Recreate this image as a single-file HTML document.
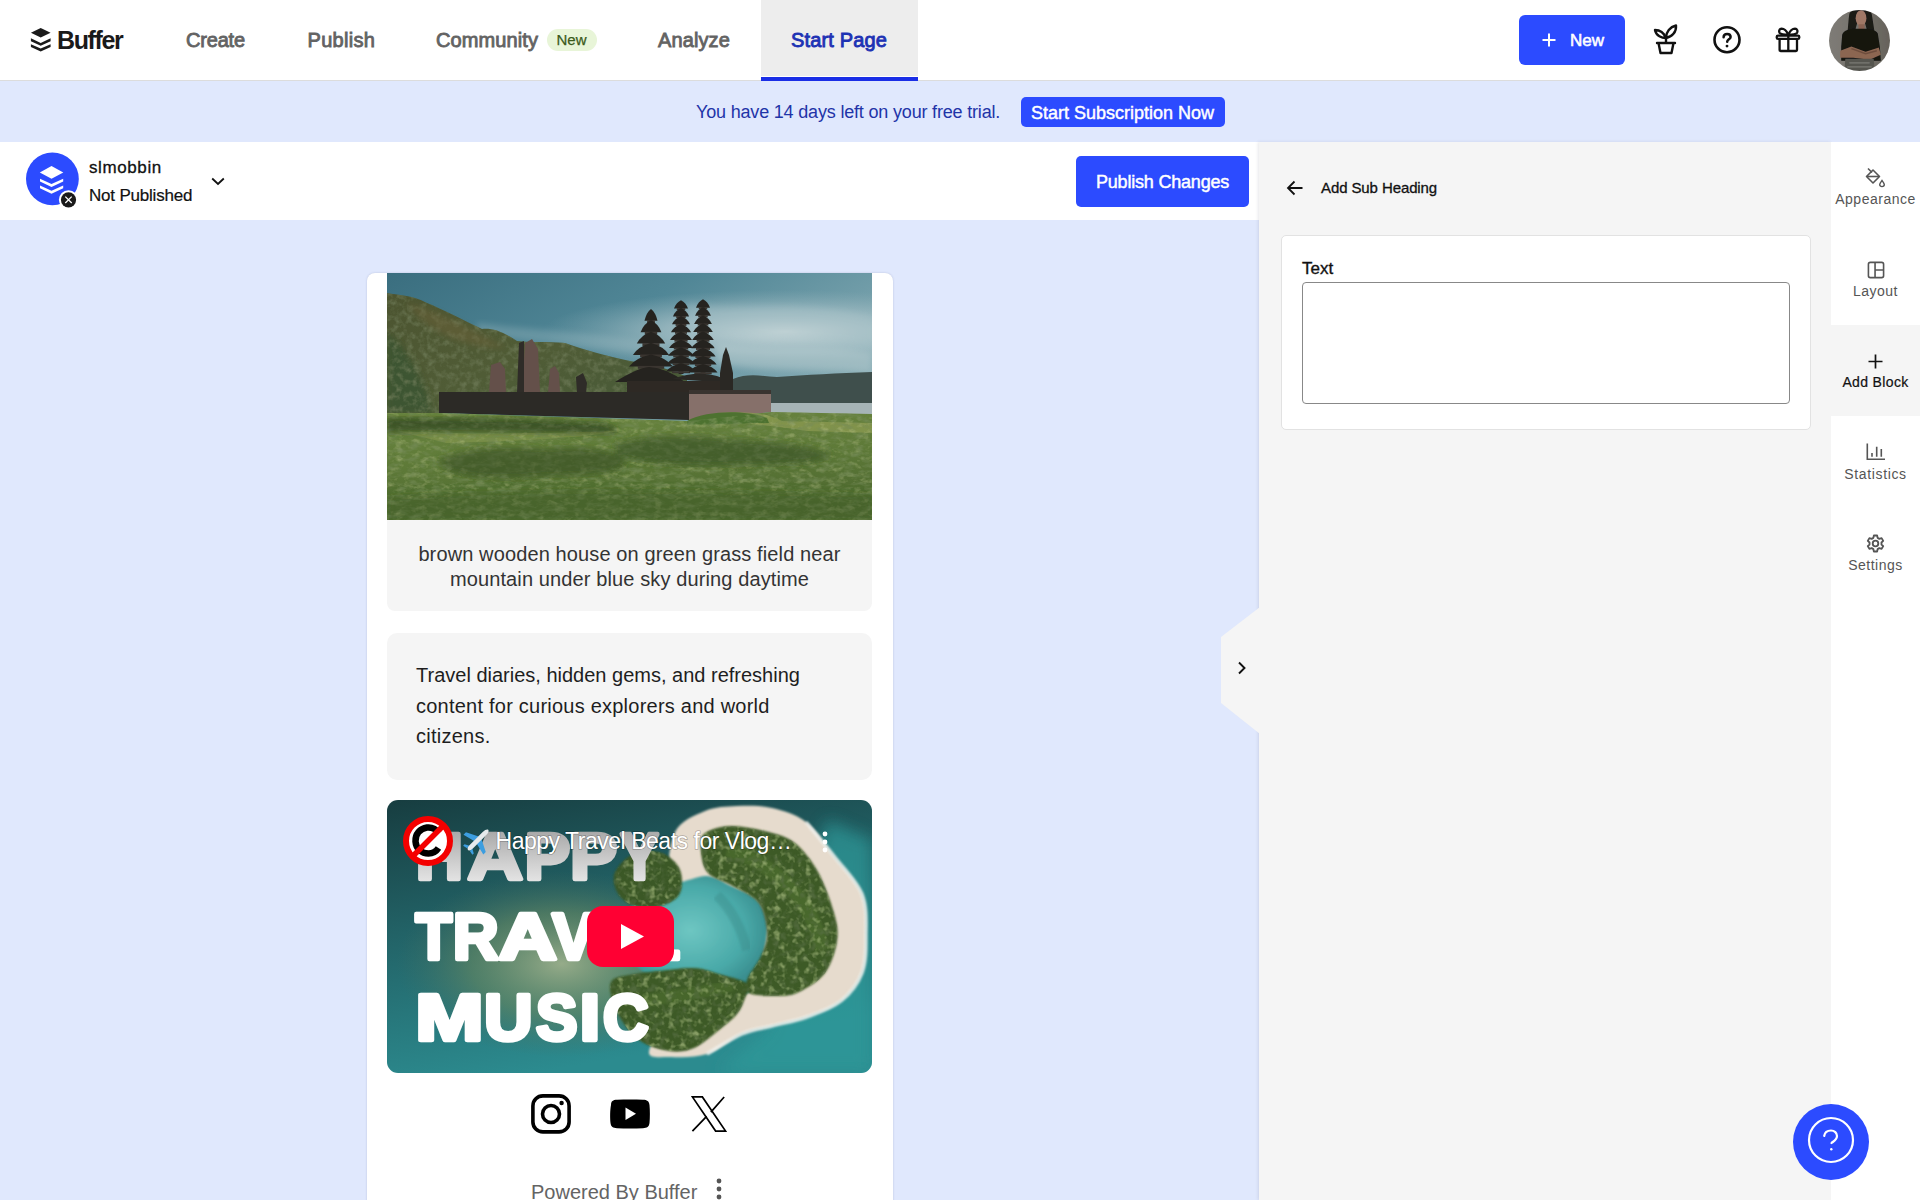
<!DOCTYPE html>
<html><head><meta charset="utf-8">
<style>
*{box-sizing:border-box;margin:0;padding:0}
html,body{width:1920px;height:1200px;overflow:hidden;background:#fff;font-family:"Liberation Sans",sans-serif;position:relative}
.a{position:absolute}
.t{position:absolute;white-space:nowrap;line-height:1}
/* header */
#hdr{left:0;top:0;width:1920px;height:81px;background:#fff;border-bottom:1px solid #dcdcdc}
.nav{font-size:20px;color:#636363;-webkit-text-stroke:0.85px #636363;letter-spacing:0.1px}
#banner{left:0;top:81px;width:1920px;height:61px;background:#e0e8fd}
#sub{left:0;top:142px;width:1259px;height:78px;background:#fff}
#canvas{left:0;top:220px;width:1259px;height:980px;background:#e0e8fd}
#panel{left:1259px;top:142px;width:572px;height:1058px;background:#f5f5f5;box-shadow:-1px 0 3px rgba(60,60,90,0.12)}
#side{left:1831px;top:142px;width:89px;height:1058px;background:#fff}
.btn{background:#2c4bff;color:#fff;border-radius:5px}
.sidelbl{font-size:14px;color:#555;width:89px;text-align:center;left:0;letter-spacing:0.5px}
</style></head><body>

<div id="hdr" class="a"></div>
<!-- logo -->
<svg class="a" style="left:30px;top:28px" width="22" height="24" viewBox="0 0 22 24">
  <path d="M10.7 0 L20.6 4.7 L10.7 9.4 L0.9 4.7 Z" fill="#1a1a1a"/>
  <path d="M0.9 10.3 L10.7 14.9 L20.6 10.3 L20.6 13.2 L10.7 17.8 L0.9 13.2 Z" fill="#1a1a1a"/>
  <path d="M0.9 16.2 L10.7 20.6 L20.6 16.2 L20.6 19.1 L10.7 23.5 L0.9 19.1 Z" fill="#1a1a1a"/>
</svg>
<div class="t" style="left:57px;top:28px;font-size:25px;font-weight:bold;color:#1a1a1a;letter-spacing:-1.4px">Buffer</div>

<div class="t nav" style="left:186px;top:30px;letter-spacing:-0.2px">Create</div>
<div class="t nav" style="left:307.5px;top:30px;letter-spacing:0.3px">Publish</div>
<div class="t nav" style="left:436px;top:30px">Community</div>
<div class="a" style="left:547px;top:29px;width:50px;height:22px;border-radius:11px;background:#e8f5d8"></div>
<div class="t" style="left:556.5px;top:32px;font-size:15px;color:#3a5a1a;-webkit-text-stroke:0.25px #3a5a1a">New</div>
<div class="t nav" style="left:658px;top:30px">Analyze</div>
<div class="a" style="left:761px;top:0;width:157px;height:76px;background:#ededed"></div>
<div class="a" style="left:761px;top:77px;width:157px;height:5px;background:#1a2ee6"></div>
<div class="t nav" style="left:791px;top:30px;color:#1d32b4;-webkit-text-stroke:0.85px #1d32b4;letter-spacing:0.15px">Start Page</div>

<div class="a btn" style="left:1519px;top:15px;width:106px;height:50px;border-radius:6px"></div>
<svg class="a" style="left:1542px;top:33px" width="14" height="14" viewBox="0 0 14 14"><path d="M7 0.5V13.5M0.5 7H13.5" stroke="#fff" stroke-width="2"/></svg>
<div class="t" style="left:1570px;top:32px;font-size:17px;color:#fff;-webkit-text-stroke:0.55px #fff">New</div>

<!-- plant -->
<svg class="a" style="left:1652px;top:24px" width="28" height="32" viewBox="0 0 28 32">
 <path d="M14 14 C10 14 4 12 3 6 C8 6 12 9 14 14 Z" fill="none" stroke="#111" stroke-width="2.4" stroke-linejoin="round"/>
 <path d="M14 14 C14 8 18 3 24 1.5 C24.5 8 20 13 14 14 Z" fill="none" stroke="#111" stroke-width="2.4" stroke-linejoin="round"/>
 <path d="M14 14 V19" stroke="#111" stroke-width="2.4"/>
 <path d="M5 19 H23 M6.5 19 L8.5 29 H19.5 L21.5 19" fill="none" stroke="#111" stroke-width="2.4" stroke-linejoin="round" stroke-linecap="round"/>
</svg>
<!-- help -->
<svg class="a" style="left:1712px;top:25px" width="30" height="30" viewBox="0 0 30 30">
 <circle cx="15" cy="14.7" r="12.5" fill="none" stroke="#111" stroke-width="2.6"/>
 <path d="M11.6 12.2 C11.6 10.1 13.1 8.9 15.1 8.9 C17.1 8.9 18.6 10.2 18.6 11.9 C18.6 14.2 15.2 14.5 15.2 16.8" fill="none" stroke="#111" stroke-width="2.5" stroke-linecap="round"/>
 <circle cx="15" cy="21.1" r="1.45" fill="#111"/>
</svg>
<!-- gift -->
<svg class="a" style="left:1773px;top:26px" width="30" height="28" viewBox="0 0 30 28">
 <rect x="3.75" y="9.55" width="22.5" height="3.4" rx="1.3" fill="none" stroke="#111" stroke-width="2.3"/>
 <path d="M6.6 13 V24 Q6.6 25 7.6 25 H23 Q24 25 24 24 V13" fill="none" stroke="#111" stroke-width="2.3"/>
 <path d="M15.3 9.5 V25" stroke="#111" stroke-width="2.3"/>
 <path d="M15.3 8.6 C13.5 4.6 11 2.6 8.6 2.6 C6.4 2.7 5.6 5.2 6.6 6.8 C7.6 8.3 10.5 8.6 15.3 8.6 C20.1 8.6 23 8.3 24 6.8 C25 5.2 24.2 2.7 22 2.6 C19.6 2.6 17.1 4.6 15.3 8.6 Z" fill="none" stroke="#111" stroke-width="2.3" stroke-linejoin="round"/>
</svg>
<!-- avatar -->
<svg class="a" style="left:1829px;top:10px" width="61" height="61" viewBox="0 0 60 60">
 <defs><clipPath id="av"><circle cx="30" cy="30" r="30"/></clipPath>
 <linearGradient id="avbg" x1="0" y1="0" x2="1" y2="0"><stop offset="0" stop-color="#7e7b76"/><stop offset="0.5" stop-color="#76736d"/><stop offset="1" stop-color="#66625b"/></linearGradient>
 <filter id="avs"><feGaussianBlur stdDeviation="0.5"/></filter></defs>
 <g clip-path="url(#av)" filter="url(#avs)">
  <rect width="60" height="60" fill="url(#avbg)"/>
  <path d="M20 4 C21 -2 41 -2 42 4 C43 10 44 16 45 23 L38 24 C37 18 36 14 35 12 L28 12 C27 15 26 19 25 24 L18 23 C19 16 19 10 20 4 Z" fill="#1a1a17"/>
  <ellipse cx="31.5" cy="8" rx="5.3" ry="7.8" fill="#a07866"/>
  <rect x="29" y="14" width="6" height="5" fill="#8a6352"/>
  <path d="M13 24 C15 19 22 18 30 18.5 C38 18 46 19 48 23 L50 36 L51 50 L12 50 L12 36 Z" fill="#121311"/>
  <path d="M11 40 L22 36 L36 41 L49 37 L51 44 L40 49 L24 47 L11 47 Z" fill="#8c6651"/>
  <path d="M22 38 L36 43 L47 40" fill="none" stroke="#6e4e3e" stroke-width="1.5"/>
  <path d="M16 48 L44 48 L45 62 L15 62 Z" fill="#55544f"/>
  <path d="M20 52 L40 52 M18 56 L42 56" stroke="#7a7a76" stroke-width="1.2"/>
 </g>
</svg>

<!-- banner -->
<div id="banner" class="a"></div>
<div class="t" style="left:696px;top:103px;font-size:18px;color:#1f34a8;letter-spacing:-0.18px">You have 14 days left on your free trial.</div>
<div class="a btn" style="left:1021px;top:97px;width:204px;height:30px;border-radius:5px"></div>
<div class="t" style="left:1031px;top:104px;font-size:18px;color:#fff;-webkit-text-stroke:0.45px #fff">Start Subscription Now</div>

<!-- sub header -->
<div id="sub" class="a"></div>
<div id="canvas" class="a"></div>
<div id="panel" class="a"></div>
<div id="side" class="a"></div>


<!-- sub header content -->
<svg class="a" style="left:25px;top:152px" width="56" height="58" viewBox="0 0 56 58">
 <circle cx="27.4" cy="26.9" r="26.4" fill="#2c4bff"/>
 <path d="M26.5 14 L38.3 20.4 L26.5 26.8 L14.8 20.4 Z" fill="#fff"/>
 <path d="M15 26.7 L26.5 32 L38.2 26.7 L38.2 29.4 L26.5 34.9 L15 29.4 Z" fill="#fff"/>
 <path d="M15 33.5 L26.5 38.8 L38.2 33.5 L38.2 36.3 L26.5 41.8 L15 36.3 Z" fill="#fff"/>
 <circle cx="43.5" cy="47.8" r="9.6" fill="#fff"/>
 <circle cx="43.5" cy="47.8" r="7.6" fill="#1a1a1a"/>
 <path d="M40.3 44.6 L46.7 51 M46.7 44.6 L40.3 51" stroke="#fff" stroke-width="1.3"/>
</svg>
<div class="t" style="left:89px;top:159px;font-size:17px;color:#111;letter-spacing:0.6px;-webkit-text-stroke:0.3px #111">slmobbin</div>
<div class="t" style="left:89px;top:187px;font-size:17px;color:#111;letter-spacing:-0.2px;-webkit-text-stroke:0.2px #111">Not Published</div>
<svg class="a" style="left:211px;top:177px" width="14" height="9" viewBox="0 0 14 9"><path d="M1.2 1.5 L7 7 L12.8 1.5" fill="none" stroke="#111" stroke-width="1.8"/></svg>
<div class="a btn" style="left:1076px;top:156px;width:173px;height:51px;border-radius:5px"></div>
<div class="t" style="left:1096px;top:173px;font-size:18px;color:#fff;-webkit-text-stroke:0.45px #fff;letter-spacing:-0.2px">Publish Changes</div>


<!-- preview card -->
<div class="a" style="left:367px;top:273px;width:526px;height:940px;background:#fff;border-radius:8px;box-shadow:0 0 2px rgba(60,70,120,0.25)"></div>
<svg class="a" style="left:387px;top:273px" width="485" height="247" viewBox="0 0 485 247">
 <defs>
  <linearGradient id="sky" x1="0" y1="0" x2="0.8" y2="0.7"><stop offset="0" stop-color="#3a6e7f"/><stop offset="0.45" stop-color="#508696"/><stop offset="1" stop-color="#8db0b8"/></linearGradient>
  <radialGradient id="skyl" cx="0.82" cy="0.42" r="0.5" gradientTransform="translate(0.41 0.42) scale(1 0.6) translate(-0.41 -0.42)"><stop offset="0" stop-color="#cad8da" stop-opacity="1"/><stop offset="0.5" stop-color="#a9c2c8" stop-opacity="0.7"/><stop offset="1" stop-color="#8fb0b8" stop-opacity="0"/></radialGradient>
  <linearGradient id="grass" x1="0" y1="0" x2="0.2" y2="1"><stop offset="0" stop-color="#6a853f"/><stop offset="0.5" stop-color="#5e7a38"/><stop offset="1" stop-color="#4c672f"/></linearGradient>
  <linearGradient id="hill" x1="0" y1="0" x2="1" y2="1"><stop offset="0" stop-color="#4c5430"/><stop offset="0.5" stop-color="#505c36"/><stop offset="1" stop-color="#465a38"/></linearGradient>
  <filter id="tsoft"><feGaussianBlur stdDeviation="3"/></filter>
  <filter id="gtex" x="0" y="0" width="100%" height="100%"><feTurbulence type="fractalNoise" baseFrequency="0.09 0.2" numOctaves="3" seed="7"/><feColorMatrix values="0 0 0 0 0.18  0 0 0 0 0.26  0 0 0 0 0.1  2.2 0 0 0 -0.95"/></filter>
  <filter id="gtex2" x="0" y="0" width="100%" height="100%"><feTurbulence type="fractalNoise" baseFrequency="0.12 0.18" numOctaves="3" seed="11"/><feColorMatrix values="0 0 0 0 0.62  0 0 0 0 0.66  0 0 0 0 0.35  2.2 0 0 0 -1.1"/></filter>
  <filter id="htex" x="0" y="0" width="100%" height="100%"><feTurbulence type="fractalNoise" baseFrequency="0.15" numOctaves="3" seed="5"/><feColorMatrix values="0 0 0 0 0.16  0 0 0 0 0.2  0 0 0 0 0.1  -2.6 0 0 0 1.5"/></filter>
  <clipPath id="gclip"><path d="M0 140 L52 140 L302 148 L384 139 L485 141 L485 247 L0 247 Z"/></clipPath>
  <clipPath id="hclip"><path d="M0 20 C10 22 25 22 40 30 C55 36 70 44 95 56 C105 55 115 58 130 68 C145 70 160 68 178 70 C195 76 215 82 243 88 C265 92 285 96 300 104 L300 140 L0 140 Z"/></clipPath>
 </defs>
 <rect width="485" height="247" fill="url(#sky)"/>
 <rect width="485" height="140" fill="url(#skyl)"/>
 <path d="M300 30 C350 40 420 25 485 45 L485 75 C420 60 360 70 300 55 Z" fill="#a8c2c8" opacity="0.35" filter="url(#tsoft)"/><path d="M330 70 C390 80 440 70 485 80 L485 100 C430 95 380 100 330 90 Z" fill="#c0d2d4" opacity="0.4" filter="url(#tsoft)"/>
 <path d="M90 50 C150 58 220 60 280 72 L270 82 C200 75 140 70 90 60 Z" fill="#a8c2c8" opacity="0.3" filter="url(#tsoft)"/>
 <path d="M0 20 C10 22 25 22 40 30 C55 36 70 44 95 56 C105 55 115 58 130 68 C145 70 160 68 178 70 C195 76 215 82 243 88 C265 92 285 96 300 104 L300 140 L0 140 Z" fill="url(#hill)"/>
 <path d="M0 60 C15 70 30 95 40 120 L45 140 L0 140 Z" fill="#3e5530" filter="url(#tsoft)"/>
 <g clip-path="url(#hclip)"><rect x="0" y="0" width="260" height="140" filter="url(#htex)" opacity="0.7"/></g>
 <path d="M20 30 C60 40 90 60 120 75 C80 75 40 60 20 30 Z" fill="#6a6038" opacity="0.5" filter="url(#tsoft)"/>
 
 <path d="M346 106 C360 100 375 103 390 104 C420 102 450 100 485 99 L485 130 L346 130 Z" fill="#3f4f4c"/>
 <rect x="384" y="130" width="101" height="11" fill="#a6b4b6"/>
 <!-- gates -->
 <path d="M104 92 L113 89 L118 96 L119 120 L102 120 Z" fill="#64504a"/>
 <path d="M138 70 L145 66 L151 76 L153 120 L135 120 Z" fill="#64504a"/>
 <path d="M132 70 L137 68 L137 120 L130 120 Z" fill="#2f2c28"/>
 <path d="M163 96 L168 93 L172 100 L173 120 L161 120 Z" fill="#64504a"/>
 <path d="M189 104 L196 100 L200 110 L199 120 L190 120 Z" fill="#2f2c28"/>
 <!-- pagodas -->
 <rect x="261.5" y="39" width="5" height="57" fill="#25231f"/>
 <path d="M257.5 47.8 Q259.4 39.3 264 35.9 Q268.6 39.3 270.5 47.8 Z" fill="#25231f"/>
 <rect x="260.1" y="47.3" width="7.8" height="2.9" fill="#3a3530"/>
 <path d="M253.6 59.2 Q256.7 50.7 264 47.3 Q271.3 50.7 274.4 59.2 Z" fill="#25231f"/>
 <rect x="257.8" y="58.7" width="12.4" height="2.9" fill="#3a3530"/>
 <path d="M249.8 70.6 Q254.0 62.1 264 58.7 Q274.0 62.1 278.2 70.6 Z" fill="#25231f"/>
 <rect x="255.4" y="70.1" width="17.1" height="2.9" fill="#3a3530"/>
 <path d="M245.9 82.0 Q251.3 73.5 264 70.1 Q276.7 73.5 282.1 82.0 Z" fill="#25231f"/>
 <rect x="253.1" y="81.5" width="21.8" height="2.9" fill="#3a3530"/>
 <path d="M242.0 93.4 Q248.6 84.9 264 81.5 Q279.4 84.9 286.0 93.4 Z" fill="#25231f"/>
 <rect x="250.8" y="92.9" width="26.4" height="2.9" fill="#3a3530"/>
 <rect x="291.5" y="30" width="5" height="71" fill="#25231f"/>
 <path d="M287.0 35.5 Q289.1 29.6 294 27.2 Q298.9 29.6 301.0 35.5 Z" fill="#25231f"/>
 <rect x="289.8" y="35.1" width="8.4" height="2.0" fill="#3a3530"/>
 <path d="M286.0 43.4 Q288.4 37.5 294 35.1 Q299.6 37.5 302.0 43.4 Z" fill="#25231f"/>
 <rect x="289.2" y="43.0" width="9.6" height="2.0" fill="#3a3530"/>
 <path d="M285.0 51.3 Q287.7 45.4 294 43.0 Q300.3 45.4 303.0 51.3 Z" fill="#25231f"/>
 <rect x="288.6" y="50.9" width="10.8" height="2.0" fill="#3a3530"/>
 <path d="M284.0 59.2 Q287.0 53.2 294 50.9 Q301.0 53.2 304.0 59.2 Z" fill="#25231f"/>
 <rect x="288.0" y="58.8" width="12.0" height="2.0" fill="#3a3530"/>
 <path d="M283.0 67.0 Q286.3 61.1 294 58.8 Q301.7 61.1 305.0 67.0 Z" fill="#25231f"/>
 <rect x="287.4" y="66.7" width="13.2" height="2.0" fill="#3a3530"/>
 <path d="M282.0 74.9 Q285.6 69.0 294 66.7 Q302.4 69.0 306.0 74.9 Z" fill="#25231f"/>
 <rect x="286.8" y="74.5" width="14.4" height="2.0" fill="#3a3530"/>
 <path d="M281.0 82.8 Q284.9 76.9 294 74.5 Q303.1 76.9 307.0 82.8 Z" fill="#25231f"/>
 <rect x="286.2" y="82.4" width="15.6" height="2.0" fill="#3a3530"/>
 <path d="M280.0 90.7 Q284.2 84.8 294 82.4 Q303.8 84.8 308.0 90.7 Z" fill="#25231f"/>
 <rect x="285.6" y="90.3" width="16.8" height="2.0" fill="#3a3530"/>
 <path d="M279.0 98.6 Q283.5 92.7 294 90.3 Q304.5 92.7 309.0 98.6 Z" fill="#25231f"/>
 <rect x="285.0" y="98.2" width="18.0" height="2.0" fill="#3a3530"/>
 <rect x="313.5" y="29" width="5" height="73" fill="#25231f"/>
 <path d="M309.0 34.7 Q311.1 28.6 316 26.2 Q320.9 28.6 323.0 34.7 Z" fill="#25231f"/>
 <rect x="311.8" y="34.3" width="8.4" height="2.0" fill="#3a3530"/>
 <path d="M308.1 42.8 Q310.4 36.7 316 34.3 Q321.6 36.7 323.9 42.8 Z" fill="#25231f"/>
 <rect x="311.2" y="42.4" width="9.5" height="2.0" fill="#3a3530"/>
 <path d="M307.1 50.9 Q309.8 44.8 316 42.4 Q322.2 44.8 324.9 50.9 Z" fill="#25231f"/>
 <rect x="310.7" y="50.5" width="10.7" height="2.0" fill="#3a3530"/>
 <path d="M306.2 59.0 Q309.1 53.0 316 50.5 Q322.9 53.0 325.8 59.0 Z" fill="#25231f"/>
 <rect x="310.1" y="58.6" width="11.8" height="2.0" fill="#3a3530"/>
 <path d="M305.2 67.1 Q308.5 61.1 316 58.6 Q323.5 61.1 326.8 67.1 Z" fill="#25231f"/>
 <rect x="309.6" y="66.7" width="12.9" height="2.0" fill="#3a3530"/>
 <path d="M304.3 75.3 Q307.8 69.2 316 66.7 Q324.2 69.2 327.7 75.3 Z" fill="#25231f"/>
 <rect x="309.0" y="74.9" width="14.0" height="2.0" fill="#3a3530"/>
 <path d="M303.4 83.4 Q307.2 77.3 316 74.9 Q324.8 77.3 328.6 83.4 Z" fill="#25231f"/>
 <rect x="308.4" y="83.0" width="15.1" height="2.0" fill="#3a3530"/>
 <path d="M302.4 91.5 Q306.5 85.4 316 83.0 Q325.5 85.4 329.6 91.5 Z" fill="#25231f"/>
 <rect x="307.9" y="91.1" width="16.3" height="2.0" fill="#3a3530"/>
 <path d="M301.5 99.6 Q305.9 93.5 316 91.1 Q326.1 93.5 330.5 99.6 Z" fill="#25231f"/>
 <rect x="307.3" y="99.2" width="17.4" height="2.0" fill="#3a3530"/>
 <path d="M228 109 Q250 95 262 94 Q280 95 298 109 Z" fill="#25231f"/>
 <path d="M285 106 Q320 94 345 110 Z" fill="#2a2824"/>
 <rect x="240" y="108" width="100" height="12" fill="#2e2924"/>
 <path d="M336 82 L339 74 L342 82 L346 100 L346 120 L333 120 L333 100 Z" fill="#2a2824"/>
 <!-- walls -->
 <path d="M52 119 L302 119 L302 147 L52 140 Z" fill="#2c2a26"/>
 <path d="M302 119 L384 121 L384 139 L302 149 Z" fill="#86706a"/>
 <rect x="302" y="117" width="82" height="4" fill="#3a3430"/>
 <!-- grass -->
 <path d="M0 140 L52 140 L302 148 L384 139 L485 141 L485 247 L0 247 Z" fill="url(#grass)"/>
 <path d="M330 140 C360 138 380 140 395 148 L485 150 L485 160 L420 158 C380 152 350 150 330 146 Z" fill="#8a9850" opacity="0.8"/>
 <path d="M0 145 C60 144 150 146 210 150 C240 156 240 160 200 158 C120 156 50 155 0 156 Z" fill="#3f5a28" opacity="0.8" filter="url(#tsoft)"/>
 <path d="M300 148 C320 137 360 137 380 145 L382 150 L300 152 Z" fill="#4d7230"/>
 <path d="M10 158 C80 162 160 160 230 158 C200 165 130 168 60 170 Z" fill="#8a9a52" opacity="0.55"/>
 <path d="M55 195 C70 180 110 178 160 180 C200 175 240 180 240 195 C230 205 190 200 140 205 C100 206 70 205 55 195 Z" fill="#48662c" opacity="0.6" filter="url(#tsoft)"/>
 <path d="M230 175 C260 165 300 165 340 170 C380 172 420 175 440 185 C420 195 380 192 340 193 C300 195 260 192 230 185 Z" fill="#48662c" opacity="0.6" filter="url(#tsoft)"/>
 <path d="M0 215 C100 205 300 208 485 212 L485 247 L0 247 Z" fill="#4e6e2e" opacity="0.55"/>
 <g clip-path="url(#gclip)"><rect x="0" y="130" width="485" height="117" filter="url(#gtex2)" opacity="0.45"/><rect x="0" y="130" width="485" height="117" filter="url(#gtex)" opacity="0.8"/></g>
 <g filter="url(#tsoft)">
  <path d="M0 146 C60 145 150 147 215 151 C240 156 236 162 200 161 C120 159 50 158 0 160 Z" fill="#2e4620" opacity="0.55"/>
  <path d="M50 188 C70 176 110 172 160 176 C200 172 235 178 238 190 C228 203 190 200 140 204 C100 206 66 204 50 188 Z" fill="#3a5424" opacity="0.6"/>
  <path d="M228 170 C260 162 300 160 340 166 C380 168 425 172 445 182 C425 193 380 190 340 192 C300 194 258 190 228 182 Z" fill="#3a5424" opacity="0.55"/>
  <path d="M0 225 C120 215 300 218 485 222 L485 247 L0 247 Z" fill="#3f5a26" opacity="0.4"/>
 </g>
</svg>
<div class="a" style="left:387px;top:520px;width:485px;height:91px;background:#f5f5f5;border-radius:0 0 8px 8px"></div>
<div class="a" style="left:387px;top:542px;width:485px;text-align:center;font-size:20px;line-height:25px;color:#333;white-space:normal;letter-spacing:0.12px">brown wooden house on green grass field near<br>mountain under blue sky during daytime</div>

<div class="a" style="left:387px;top:633px;width:485px;height:147px;background:#f5f5f5;border-radius:10px"></div>
<div class="a" style="left:416px;top:660px;font-size:20px;line-height:30.5px;color:#1e1e1e;white-space:nowrap">Travel diaries, hidden gems, and refreshing<br><span style="letter-spacing:0.23px">content for curious explorers and world</span><br><span style="letter-spacing:0.25px">citizens.</span></div>

<!-- video -->
<svg class="a" style="left:387px;top:800px" width="485" height="273" viewBox="0 0 485 273">
 <defs>
  <clipPath id="vc"><rect width="485" height="273" rx="11"/></clipPath>
  <linearGradient id="sea" x1="0" y1="0" x2="0.3" y2="1"><stop offset="0" stop-color="#173d40"/><stop offset="0.45" stop-color="#226266"/><stop offset="1" stop-color="#2c8b8f"/></linearGradient>
  <radialGradient id="glow" cx="0.36" cy="0.6" r="0.34"><stop offset="0" stop-color="#a2b28c" stop-opacity="0.9"/><stop offset="0.55" stop-color="#6f8a5e" stop-opacity="0.55"/><stop offset="1" stop-color="#4a6a58" stop-opacity="0"/></radialGradient>
  <radialGradient id="lag" cx="0.45" cy="0.55" r="0.55"><stop offset="0" stop-color="#6ec6c2"/><stop offset="0.7" stop-color="#49a9a8"/><stop offset="1" stop-color="#3a8f90"/></radialGradient>
  <linearGradient id="happy" x1="0" y1="0" x2="0" y2="1"><stop offset="0" stop-color="#9a9a9a"/><stop offset="0.6" stop-color="#d0d0d0"/><stop offset="1" stop-color="#f0f0f0"/></linearGradient>
  <filter id="soft"><feGaussianBlur stdDeviation="1.3"/></filter>
  <filter id="soft3"><feGaussianBlur stdDeviation="8"/></filter>
  <clipPath id="fclip"><path d="M317.0 34.0 C322.0 29.7 332.7 26.2 344.0 26.0 C355.3 25.8 374.2 30.0 385.0 33.0 C395.8 36.0 401.3 37.5 409.0 44.0 C416.7 50.5 424.7 60.5 431.0 72.0 C437.3 83.5 443.8 101.5 447.0 113.0 C450.2 124.5 451.5 131.0 450.0 141.0 C448.5 151.0 444.3 164.5 438.0 173.0 C431.7 181.5 419.8 188.2 412.0 192.0 C404.2 195.8 399.3 195.8 391.0 196.0 C382.7 196.2 367.2 195.7 362.0 193.0 C356.8 190.3 358.2 185.8 360.0 180.0 C361.8 174.2 369.7 165.0 373.0 158.0 C376.3 151.0 379.3 145.3 380.0 138.0 C380.7 130.7 379.0 120.5 377.0 114.0 C375.0 107.5 373.5 103.8 368.0 99.0 C362.5 94.2 351.8 89.3 344.0 85.0 C336.2 80.7 326.0 78.5 321.0 73.0 C316.0 67.5 314.7 58.5 314.0 52.0 C313.3 45.5 312.0 38.3 317.0 34.0 Z"/><path d="M224.0 182.0 C227.0 175.7 240.2 175.8 248.0 174.0 C255.8 172.2 261.2 172.0 271.0 171.0 C280.8 170.0 296.8 167.5 307.0 168.0 C317.2 168.5 323.0 171.3 332.0 174.0 C341.0 176.7 356.7 180.0 361.0 184.0 C365.3 188.0 359.8 193.0 358.0 198.0 C356.2 203.0 354.3 208.7 350.0 214.0 C345.7 219.3 339.2 224.3 332.0 230.0 C324.8 235.7 315.2 244.5 307.0 248.0 C298.8 251.5 292.2 252.3 283.0 251.0 C273.8 249.7 260.8 246.5 252.0 240.0 C243.2 233.5 234.7 221.7 230.0 212.0 C225.3 202.3 221.0 188.3 224.0 182.0 Z"/><path d="M228.0 72.0 C231.0 65.5 240.2 56.2 248.0 53.0 C255.8 49.8 267.5 50.2 275.0 53.0 C282.5 55.8 290.2 63.0 293.0 70.0 C295.8 77.0 295.8 88.8 292.0 95.0 C288.2 101.2 277.8 105.3 270.0 107.0 C262.2 108.7 251.7 107.5 245.0 105.0 C238.3 102.5 232.8 97.5 230.0 92.0 C227.2 86.5 225.0 78.5 228.0 72.0 Z"/></clipPath>
  <filter id="ftex" x="0" y="0" width="100%" height="100%"><feTurbulence type="fractalNoise" baseFrequency="0.16" numOctaves="2" seed="3"/><feColorMatrix values="0 0 0 0 0.45  0 0 0 0 0.56  0 0 0 0 0.25  3 0 0 0 -1.5"/></filter>
  <filter id="ftex2" x="0" y="0" width="100%" height="100%"><feTurbulence type="fractalNoise" baseFrequency="0.14" numOctaves="2" seed="9"/><feColorMatrix values="0 0 0 0 0.1  0 0 0 0 0.16  0 0 0 0 0.06  -3 0 0 0 1.6"/></filter>
 </defs>
 <g clip-path="url(#vc)">
  <rect width="485" height="273" fill="url(#sea)"/>
  <path d="M440 20 L485 40 L485 273 L330 273 L380 230 Z" fill="#2e9a9a" opacity="0.7" filter="url(#soft3)"/>
  <rect width="485" height="273" fill="url(#glow)"/>
  <!-- lagoon / open light water -->
  <path d="M270.0 72.0 C282.8 66.2 305.5 65.7 322.0 70.0 C338.5 74.3 359.0 85.0 369.0 98.0 C379.0 111.0 381.5 134.3 382.0 148.0 C382.5 161.7 380.5 175.0 372.0 180.0 C363.5 185.0 344.7 177.7 331.0 178.0 C317.3 178.3 301.5 182.3 290.0 182.0 C278.5 181.7 270.3 181.3 262.0 176.0 C253.7 170.7 242.8 161.8 240.0 150.0 C237.2 138.2 240.0 118.0 245.0 105.0 C250.0 92.0 257.2 77.8 270.0 72.0 Z" fill="url(#lag)" filter="url(#soft)"/>
  <!-- sand -->
  <path d="M284.0 80.0 C278.7 72.7 282.3 43.5 288.0 32.0 C293.7 20.5 307.7 15.3 318.0 11.0 C328.3 6.7 338.8 6.5 350.0 6.0 C361.2 5.5 373.5 5.3 385.0 8.0 C396.5 10.7 408.7 14.0 419.0 22.0 C429.3 30.0 437.7 44.0 447.0 56.0 C456.3 68.0 469.7 80.7 475.0 94.0 C480.3 107.3 479.0 122.8 479.0 136.0 C479.0 149.2 479.2 162.2 475.0 173.0 C470.8 183.8 463.2 193.7 454.0 201.0 C444.8 208.3 431.5 212.8 420.0 217.0 C408.5 221.2 395.8 223.2 385.0 226.0 C374.2 228.8 365.8 229.3 355.0 234.0 C344.2 238.7 331.8 250.2 320.0 254.0 C308.2 257.8 293.7 257.3 284.0 257.0 C274.3 256.7 261.0 259.0 262.0 252.0 C263.0 245.0 272.7 225.3 290.0 215.0 C307.3 204.7 351.7 199.8 366.0 190.0 C380.3 180.2 373.7 166.8 376.0 156.0 C378.3 145.2 381.0 134.3 380.0 125.0 C379.0 115.7 376.0 106.5 370.0 100.0 C364.0 93.5 352.3 90.0 344.0 86.0 C335.7 82.0 330.0 77.0 320.0 76.0 C310.0 75.0 289.3 87.3 284.0 80.0 Z" fill="#e6dbcd" filter="url(#soft)"/>
  <path d="M419.0 22.0 C423.7 27.7 437.7 44.0 447.0 56.0 C456.3 68.0 469.7 80.7 475.0 94.0 C480.3 107.3 479.0 122.8 479.0 136.0 C479.0 149.2 479.2 162.2 475.0 173.0 C470.8 183.8 463.2 193.7 454.0 201.0 C444.8 208.3 431.5 212.8 420.0 217.0 C408.5 221.2 395.8 223.2 385.0 226.0 C374.2 228.8 365.8 229.3 355.0 234.0 C344.2 238.7 325.8 250.7 320.0 254.0" fill="none" stroke="#f5f7f5" stroke-width="3.5" opacity="0.75" filter="url(#soft)"/>
  <!-- forests -->
  <path d="M317.0 34.0 C322.0 29.7 332.7 26.2 344.0 26.0 C355.3 25.8 374.2 30.0 385.0 33.0 C395.8 36.0 401.3 37.5 409.0 44.0 C416.7 50.5 424.7 60.5 431.0 72.0 C437.3 83.5 443.8 101.5 447.0 113.0 C450.2 124.5 451.5 131.0 450.0 141.0 C448.5 151.0 444.3 164.5 438.0 173.0 C431.7 181.5 419.8 188.2 412.0 192.0 C404.2 195.8 399.3 195.8 391.0 196.0 C382.7 196.2 367.2 195.7 362.0 193.0 C356.8 190.3 358.2 185.8 360.0 180.0 C361.8 174.2 369.7 165.0 373.0 158.0 C376.3 151.0 379.3 145.3 380.0 138.0 C380.7 130.7 379.0 120.5 377.0 114.0 C375.0 107.5 373.5 103.8 368.0 99.0 C362.5 94.2 351.8 89.3 344.0 85.0 C336.2 80.7 326.0 78.5 321.0 73.0 C316.0 67.5 314.7 58.5 314.0 52.0 C313.3 45.5 312.0 38.3 317.0 34.0 Z" fill="#3c5a27" filter="url(#soft)"/>
  <path d="M228.0 72.0 C231.0 65.5 240.2 56.2 248.0 53.0 C255.8 49.8 267.5 50.2 275.0 53.0 C282.5 55.8 290.2 63.0 293.0 70.0 C295.8 77.0 295.8 88.8 292.0 95.0 C288.2 101.2 277.8 105.3 270.0 107.0 C262.2 108.7 251.7 107.5 245.0 105.0 C238.3 102.5 232.8 97.5 230.0 92.0 C227.2 86.5 225.0 78.5 228.0 72.0 Z" fill="#3a5827" filter="url(#soft)"/>
  <path d="M224.0 182.0 C227.0 175.7 240.2 175.8 248.0 174.0 C255.8 172.2 261.2 172.0 271.0 171.0 C280.8 170.0 296.8 167.5 307.0 168.0 C317.2 168.5 323.0 171.3 332.0 174.0 C341.0 176.7 356.7 180.0 361.0 184.0 C365.3 188.0 359.8 193.0 358.0 198.0 C356.2 203.0 354.3 208.7 350.0 214.0 C345.7 219.3 339.2 224.3 332.0 230.0 C324.8 235.7 315.2 244.5 307.0 248.0 C298.8 251.5 292.2 252.3 283.0 251.0 C273.8 249.7 260.8 246.5 252.0 240.0 C243.2 233.5 234.7 221.7 230.0 212.0 C225.3 202.3 221.0 188.3 224.0 182.0 Z" fill="#3c5a27" filter="url(#soft)"/>
  <path d="M340 50 C380 60 425 95 435 150" fill="none" stroke="#5f8339" stroke-width="14" opacity="0.35" filter="url(#soft)"/>
  <path d="M245 205 C275 195 315 195 345 185" fill="none" stroke="#5f8339" stroke-width="12" opacity="0.3" filter="url(#soft)"/>
  <path d="M330 95 C345 110 355 130 360 150" fill="none" stroke="#3a8a88" stroke-width="10" opacity="0.4" filter="url(#soft)"/>
  <g clip-path="url(#fclip)"><rect x="200" y="0" width="285" height="273" filter="url(#ftex2)" opacity="0.7"/><rect x="200" y="0" width="285" height="273" filter="url(#ftex)" opacity="0.6"/></g>
  <!-- text -->
  <g font-family="Liberation Sans" font-weight="bold" font-size="65.5" stroke-linejoin="round" stroke-width="4.5">
   <g fill="url(#happy)" stroke="url(#happy)"><text transform="translate(28.94 78.75) scale(0.991 1)">H</text><text transform="translate(80.69 78.75) scale(1.162 1)">A</text><text transform="translate(137.76 78.75) scale(1.036 1)">P</text><text transform="translate(183.20 78.75) scale(1.071 1)">P</text><text transform="translate(233.39 78.75) scale(0.871 1)">Y</text></g>
   <g fill="#fff" stroke="#fff"><text transform="translate(28.46 158.75) scale(0.913 1)">T</text><text transform="translate(66.08 158.75) scale(0.962 1)">R</text><text transform="translate(111.85 158.75) scale(1.226 1)">A</text><text transform="translate(165.19 158.75) scale(0.971 1)">V</text><text transform="translate(210.31 158.75) scale(1.004 1)">E</text><text transform="translate(254.37 158.75) scale(0.969 1)">L</text><text transform="translate(28.41 239.75) scale(1.245 1)">M</text><text transform="translate(97.29 239.75) scale(1.019 1)">U</text><text transform="translate(148.89 239.75) scale(0.949 1)">S</text><text transform="translate(192.73 239.75) scale(1.115 1)">I</text><text transform="translate(216.04 239.75) scale(0.964 1)">C</text></g>
  </g>
  <rect x="200" y="106" width="87" height="61" rx="16" fill="#ff0033"/>
  <path d="M234 124 L257 136.5 L234 149 Z" fill="#fff"/>
  <!-- title -->
  <g transform="translate(91 40) rotate(-45)">
   <path d="M3 -2 L-3 -14 L-6.5 -14 L-3.5 -2 Z M3 2 L-3 14 L-6.5 14 L-3.5 2 Z" fill="#3d9ee0"/>
   <path d="M-10 -2 L-12.5 -6.5 L-14.5 -6.5 L-13.5 -2 Z M-10 2 L-12.5 6.5 L-14.5 6.5 L-13.5 2Z" fill="#3d9ee0"/>
   <path d="M-14 0 C-14 -1.8 -12 -2.4 -9 -2.4 L9 -2.4 C12.5 -2.4 14.5 -1.2 14.5 0 C14.5 1.2 12.5 2.4 9 2.4 L-9 2.4 C-12 2.4 -14 1.8 -14 0Z" fill="#e6eaec"/>
  </g>
  <text id="vt" x="108.5" y="49" font-family="Liberation Sans" font-size="23" fill="#fff" letter-spacing="-0.48" style="paint-order:stroke" stroke="rgba(0,0,0,0.25)" stroke-width="1.5">Happy Travel Beats for Vlog…</text>
  <circle cx="438" cy="34" r="2.4" fill="#fff"/><circle cx="438" cy="42" r="2.4" fill="#fff"/><circle cx="438" cy="50" r="2.4" fill="#fff"/>
  <circle cx="41" cy="41" r="22" fill="#fff" stroke="#f40000" stroke-width="6"/>
  <path d="M52 33 C49 29 45 27 40 27.5 C33 28.5 28 34 28.5 41.5 C29 48.5 34.5 53.5 41.5 53.5 C46 53.5 49.5 51 51.5 48" fill="none" stroke="#000" stroke-width="6.5"/>
  <path d="M24 58 L58 24" stroke="#f40000" stroke-width="5.5"/>
 </g>
</svg>

<!-- socials -->
<svg class="a" style="left:531px;top:1094px" width="40" height="40" viewBox="0 0 40 40">
 <rect x="1.9" y="1.9" width="36.2" height="36" rx="10" fill="none" stroke="#000" stroke-width="3.6"/>
 <circle cx="20" cy="20" r="8.5" fill="none" stroke="#000" stroke-width="3.6"/>
 <circle cx="30.6" cy="9" r="2.2" fill="#000"/>
</svg>
<svg class="a" style="left:609px;top:1099px" width="42" height="30" viewBox="0 0 42 30">
 <path d="M2 6 C2 2 4 1 8 0.8 C16 0.3 26 0.3 34 0.8 C38 1 40 2 40.5 6 C41 11 41 19 40.5 24 C40 28 38 29 34 29.2 C26 29.7 16 29.7 8 29.2 C4 29 2 28 1.5 24 C1 19 1 11 2 6 Z" fill="#000"/>
 <path d="M16.5 8.5 L27 14.8 L16.5 21 Z" fill="#fff"/>
</svg>
<svg class="a" style="left:690.5px;top:1096px" width="36" height="36" viewBox="0 0 38 38">
 <path d="M1.5 1 H12 L36.5 37 H26 Z" fill="none" stroke="#000" stroke-width="1.8" stroke-linejoin="miter"/>
 <path d="M35 1 L21 17 M16.5 21.5 L1.5 37" stroke="#000" stroke-width="1.8"/>
</svg>
<div class="t" style="left:531px;top:1182px;font-size:20px;color:#646464">Powered By Buffer</div>
<svg class="a" style="left:714px;top:1177px" width="10" height="24" viewBox="0 0 10 24"><circle cx="5" cy="4" r="2.4" fill="#555"/><circle cx="5" cy="12" r="2.4" fill="#555"/><circle cx="5" cy="20" r="2.4" fill="#555"/></svg>

<!-- collapse tab -->
<svg class="a" style="left:1221px;top:607px" width="39" height="127" viewBox="0 0 39 127"><path d="M39 0 L0 30 V96 L39 127 Z" fill="#f5f5f5"/></svg>
<svg class="a" style="left:1237px;top:661px" width="10" height="14" viewBox="0 0 10 14"><path d="M2 1.5 L7.5 7 L2 12.5" fill="none" stroke="#111" stroke-width="1.9"/></svg>

<!-- panel -->
<svg class="a" style="left:1286px;top:180px" width="18" height="16" viewBox="0 0 18 16"><path d="M16.5 8 H2 M8.5 1.5 L2 8 L8.5 14.5" fill="none" stroke="#111" stroke-width="1.8"/></svg>
<div class="t" style="left:1321px;top:180px;font-size:15px;color:#111;-webkit-text-stroke:0.3px #111;letter-spacing:-0.1px">Add Sub Heading</div>
<div class="a" style="left:1281px;top:235px;width:530px;height:195px;background:#fff;border:1px solid #e2e2e2;border-radius:5px"></div>
<div class="t" style="left:1302px;top:260px;font-size:17px;color:#111;-webkit-text-stroke:0.35px #111">Text</div>
<div class="a" style="left:1302px;top:282px;width:488px;height:122px;background:#fff;border:1.5px solid #888;border-radius:4px"></div>

<!-- sidebar -->
<div class="a" style="left:1831px;top:325px;width:89px;height:91px;background:#f5f5f5"></div>

<!-- sidebar items -->
<svg class="a" style="left:1864px;top:166px" width="24" height="22" viewBox="0 0 24 22">
 <path d="M4 2.5 L8 6.5" stroke="#555" stroke-width="1.6" fill="none"/>
 <path d="M9 4 L15.5 10.5 L9 17 L2.5 10.5 Z" fill="none" stroke="#555" stroke-width="1.6" stroke-linejoin="round"/>
 <path d="M3 10.5 H15" stroke="#555" stroke-width="1.6"/>
 <path d="M18 14.5 C19.5 16.5 20.3 17.5 20.3 18.5 C20.3 19.8 19.3 20.6 18 20.6 C16.7 20.6 15.7 19.8 15.7 18.5 C15.7 17.5 16.5 16.5 18 14.5Z" fill="none" stroke="#555" stroke-width="1.4"/>
</svg>
<div class="t sidelbl" style="left:1831px;top:192px">Appearance</div>
<svg class="a" style="left:1866.5px;top:260.5px" width="18" height="18" viewBox="0 0 19 19">
 <rect x="1.5" y="1.5" width="16" height="16" rx="2" fill="none" stroke="#555" stroke-width="1.7"/>
 <path d="M8.5 1.5 V17.5 M8.5 9.5 H17.5" stroke="#555" stroke-width="1.7"/>
</svg>
<div class="t sidelbl" style="left:1831px;top:284px">Layout</div>
<svg class="a" style="left:1868px;top:354px" width="15" height="15" viewBox="0 0 15 15"><path d="M7.5 0.5 V14.5 M0.5 7.5 H14.5" stroke="#111" stroke-width="1.7"/></svg>
<div class="t sidelbl" style="left:1831px;top:375px;color:#111;letter-spacing:0.35px;-webkit-text-stroke:0.2px #111">Add Block</div>
<svg class="a" style="left:1866px;top:442px" width="20" height="20" viewBox="0 0 20 20">
 <path d="M1.3 1.5 V17.3 H19" fill="none" stroke="#555" stroke-width="1.6"/>
 <path d="M6 11 V14.8 M10.7 4.8 V14.8 M15.3 7 V14.8" stroke="#555" stroke-width="1.6"/>
</svg>
<div class="t sidelbl" style="left:1831px;top:467px;letter-spacing:0.65px">Statistics</div>
<svg class="a" style="left:1865px;top:533px" width="21" height="21" viewBox="0 0 24 24">
 <path d="M9.57 5.54 L10.15 2.89 L13.85 2.89 L14.43 5.54 L16.38 6.67 L18.97 5.84 L20.82 9.04 L18.81 10.88 L18.81 13.12 L20.82 14.96 L18.97 18.16 L16.38 17.33 L14.43 18.46 L13.85 21.11 L10.15 21.11 L9.57 18.46 L7.62 17.33 L5.03 18.16 L3.18 14.96 L5.19 13.12 L5.19 10.88 L3.18 9.04 L5.03 5.84 L7.62 6.67 Z" fill="none" stroke="#555" stroke-width="2.1" stroke-linejoin="round"/>
 <circle cx="12" cy="12" r="3.2" fill="none" stroke="#555" stroke-width="2.1"/>
</svg>
<div class="t sidelbl" style="left:1831px;top:558px">Settings</div>

<!-- help fab -->
<svg class="a" style="left:1792px;top:1103px" width="78" height="78" viewBox="0 0 78 78">
 <circle cx="39" cy="39" r="38" fill="#2c4bff"/>
 <circle cx="39" cy="37" r="22" fill="none" stroke="#fff" stroke-width="2.2"/>
 <path d="M32.2 33 C32.8 29 35.5 27.5 39 27.5 C42.5 27.5 45 30 45 33 C45 36.5 42 38 39.5 40" fill="none" stroke="#fff" stroke-width="2.2" stroke-linecap="round"/>
 <circle cx="39.3" cy="46.3" r="1.2" fill="#fff"/>
</svg>
</body></html>
